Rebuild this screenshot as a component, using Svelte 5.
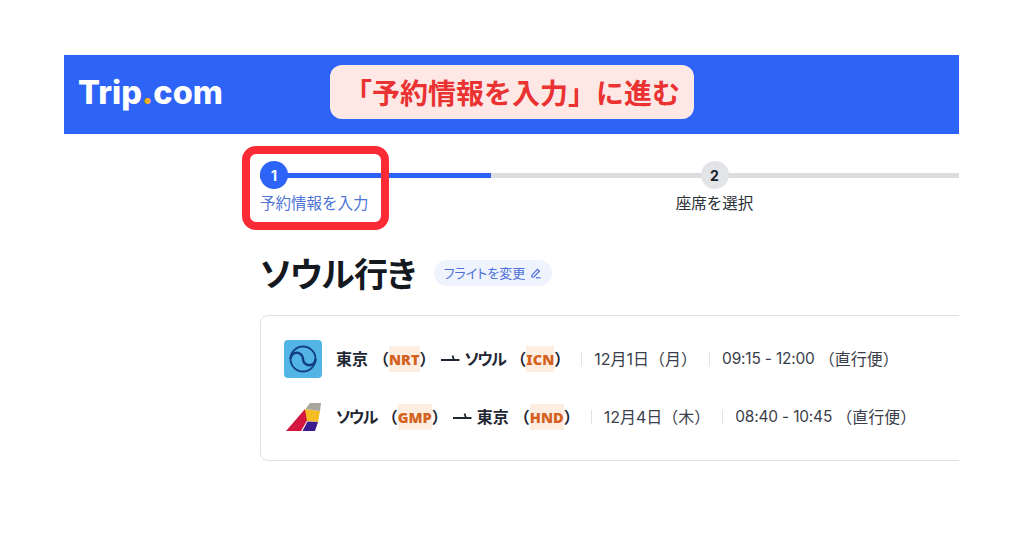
<script>
	const flights = [
		{
			from: '東京', fromCode: 'NRT', to: 'ソウル', toCode: 'ICN',
			date: '12月1日（月）', time: '09:15 - 12:00', logo: 'a'
		},
		{
			from: 'ソウル', fromCode: 'GMP', to: '東京', toCode: 'HND',
			date: '12月4日（木）', time: '08:40 - 10:45', logo: 'b'
		}
	];
	const isKana = (name) => name === 'ソウル';
</script>

<div class="page">
	<header class="topbar">
		<div class="brand">Trip<span class="brand-dot">.</span>com</div>
		<div class="callout">「予約情報を入力」に進む</div>
	</header>

	<main class="content">
		<div class="stepper">
			<div class="step step-active">
				<span class="num">1</span>
				<span class="label">予約情報を入力</span>
			</div>
			<div class="step step-next">
				<span class="num">2</span>
				<span class="label">座席を選択</span>
			</div>
			<span class="highlight" aria-hidden="true"></span>
		</div>

		<div class="title-row">
			<h1>ソウル行き</h1>
			<button class="change">
				フライトを変更
				<svg width="12" height="12" viewBox="0 0 12 12" fill="none" stroke="currentColor" stroke-width="1.2">
					<path d="M2 8.200 7.400 2.400l2 1.800L4 9.800l-2 .2z" />
					<path d="M6 10.800h4.500" />
				</svg>
			</button>
		</div>

		<section class="card">
			{#each flights as f}
				<div class="row">
					{#if f.logo === 'a'}
						<svg class="logo" viewBox="0 0 38 38">
							<rect width="38" height="38" rx="4" fill="#53b4e6" />
							<circle cx="19" cy="19" r="12.500" fill="none" stroke="#123f83" stroke-width="1.800" />
							<path d="M6.500 19A6.250 6.250 0 0 1 19 19a6.250 6.250 0 0 0 12.500 0" fill="none" stroke="#123f83" stroke-width="2.400" />
						</svg>
					{:else}
						<svg class="logo" viewBox="0 0 38 38">
							<path d="M2 33 21 11l3 10-7 12z" fill="#d5173f" />
							<path d="M21 11l15 2-2 11-11-1z" fill="#f5bd24" />
							<path d="M21.500 11 26 5h11l-1 8z" fill="#a8a59c" />
							<path d="M18.500 33l5-9.500L34 24l-3 9z" fill="#3b1b8e" />
						</svg>
					{/if}
					<span class="route">
						<span class:kana={isKana(f.from)}>{f.from}</span>
						<span class="paren">（<b class="code">{f.fromCode}</b>）</span>
						<svg class="arrow" width="19" height="8" viewBox="0 0 19 8" fill="none" stroke="currentColor" stroke-width="1.800">
							<path d="M0 6h18.500M11.500 1.500 13 6" />
						</svg>
						<span class:kana={isKana(f.to)}>{f.to}</span>
						<span class="paren">（<b class="code">{f.toCode}</b>）</span>
					</span>
					<span class="sep"></span>
					<span class="info">{f.date}</span>
					<span class="sep"></span>
					<span class="time">{f.time}</span>
					<span class="info direct">（直行便）</span>
				</div>
			{/each}
		</section>
	</main>
</div>

<style>
	:global(body) {
		margin: 0;
		background: #fff;
	}
	.page {
		width: 895px;
		height: 483px;
		margin-left: 64px;
		padding-top: 55px;
		overflow: hidden;
		font-family: "Noto Sans CJK JP", "Noto Sans", sans-serif;
		color: #1c2330;
	}
	.topbar {
		display: flex;
		align-items: center;
		height: 79px;
		background: #2d63f6;
		padding: 0 0 5px 14px;
		box-sizing: border-box;
	}
	.brand {
		width: 252px;
		font-family: Inter, sans-serif;
		font-size: 32.500px;
		font-weight: 800;
		color: #fff;
	}
	.brand-dot {
		color: #f5b01e;
	}
	.callout {
		display: flex;
		align-items: center;
		height: 54px;
		width: 364px;
		padding-left: 14px;
		box-sizing: border-box;
		border-radius: 12px;
		background: #fde8e6;
		color: #ea3232;
		font-size: 28px;
		font-weight: 700;
		white-space: nowrap;
	}
	.content {
		padding-left: 196px;
	}
	.stepper {
		position: relative;
		display: flex;
		height: 96px;
		box-sizing: border-box;
		padding-top: 27px;
		background: linear-gradient(#2d63f6, #2d63f6) 0 39px / 231px 5px no-repeat,
			linear-gradient(#dcdde0, #dcdde0) 0 39px / 100% 5px no-repeat;
	}
	.step {
		display: flex;
		flex-direction: column;
		align-items: center;
		gap: 3px;
	}
	.step-active {
		align-items: flex-start;
		width: 415px;
	}
	.step-next {
		width: 79px;
	}
	.num {
		display: flex;
		align-items: center;
		justify-content: center;
		width: 28px;
		height: 28px;
		border-radius: 50%;
		font-family: Inter, sans-serif;
		font-size: 14px;
		font-weight: 700;
	}
	.step-active .num {
		background: #2d63f6;
		color: #fff;
	}
	.step-next .num {
		background: #e2e4e8;
		color: #1c2330;
	}
	.label {
		font-size: 15.500px;
		line-height: 20px;
		white-space: nowrap;
		color: #2c3038;
	}
	.step-active .label {
		color: #4d74d6;
	}
	.highlight {
		position: absolute;
		left: -18px;
		top: 12px;
		width: 147px;
		height: 84px;
		box-sizing: border-box;
		border: 8px solid #fb2b35;
		border-radius: 14px;
	}
	.title-row {
		display: flex;
		align-items: center;
		gap: 18px;
		height: 85px;
	}
	h1 {
		margin: 0;
		font-size: 34px;
		font-weight: 700;
		font-feature-settings: "palt";
		letter-spacing: -0.8px;
		color: #14181f;
	}
	.change {
		display: flex;
		align-items: center;
		gap: 5px;
		height: 26px;
		width: 118px;
		box-sizing: border-box;
		padding: 0 0 0 10px;
		border: 0;
		border-radius: 13px;
		background: #eff3fe;
		color: #4d70d8;
		font-family: inherit;
		font-size: 13px;
		font-feature-settings: "palt";
		white-space: nowrap;
	}
	.card {
		width: 720px;
		height: 146px;
		box-sizing: border-box;
		padding-top: 24px;
		border: 1px solid #dfe1e4;
		border-radius: 8px;
		display: flex;
		flex-direction: column;
		gap: 20px;
	}
	.row {
		display: flex;
		align-items: center;
		height: 38px;
		padding-left: 23px;
		white-space: nowrap;
	}
	.logo {
		flex: none;
		width: 38px;
		height: 38px;
		margin-right: 14px;
	}
	.route {
		display: flex;
		align-items: center;
		margin-bottom: 2px;
		font-size: 16px;
		font-weight: 700;
		font-feature-settings: "palt";
		color: #1f2633;
	}
	.kana {
		letter-spacing: -1.500px;
	}
	.paren {
		margin-left: 5px;
		font-feature-settings: normal;
	}
	.code {
		font-family: "Noto Sans", sans-serif;
		font-size: 14.500px;
		color: #d4611d;
		background: #feeee2;
		padding: 3px 0;
	}
	.arrow {
		margin: 0 5px 0 5px;
	}
	.sep {
		width: 1px;
		height: 14px;
		margin: 0 12px 0 11px;
		background: #e0e2e5;
	}
	.info + .sep {
		margin-left: 12px;
	}
	.info {
		margin-bottom: 2px;
		color: #3a404b;
		font-family: Inter, "Noto Sans CJK JP", sans-serif;
		font-size: 16px;
	}
	.time {
		margin-bottom: 2px;
		color: #3a404b;
		font-family: Inter, sans-serif;
		font-size: 15.500px;
		letter-spacing: -0.2px;
	}
	.direct {
		margin-left: 4px;
	}
</style>
